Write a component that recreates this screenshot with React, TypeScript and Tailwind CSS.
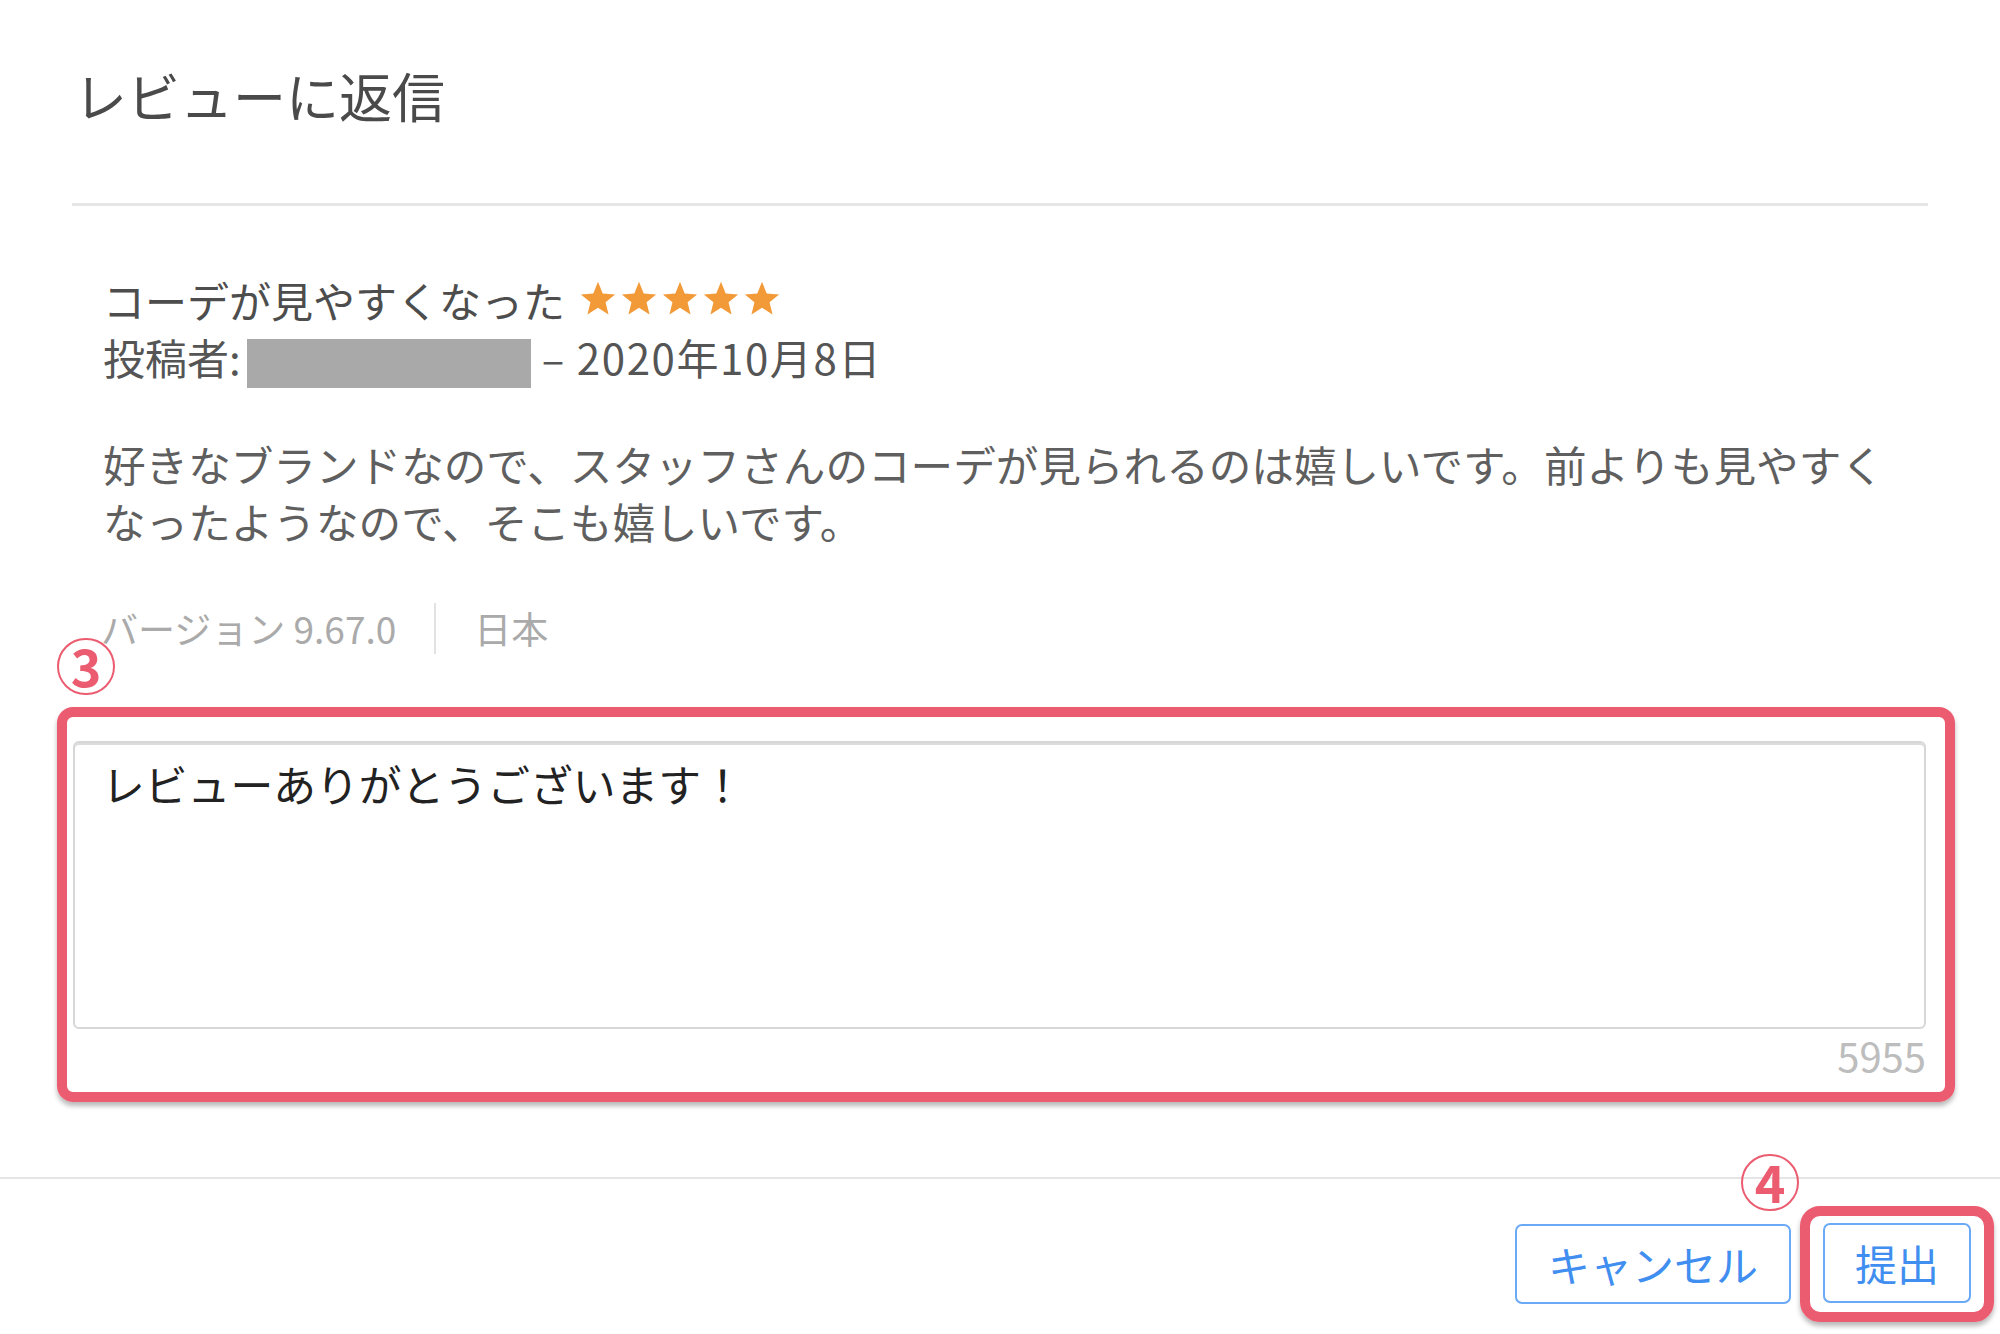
import React from 'react';

const FONT = {
  fontFamily: '"Noto Sans CJK JP", "Noto Sans", "Liberation Sans", sans-serif',
};

function Star() {
  return (
    <svg viewBox="0 0 24 24" className="h-[37px] w-[38px]" aria-hidden>
      <path
        d="M12 1.2l3.05 7.6 8.05.55-6.2 5.15 1.95 7.9L12 18.05 5.15 22.4l1.95-7.9L.9 9.35l8.05-.55z"
        fill="#f29a38"
      />
    </svg>
  );
}

// Pink circled step number drawn over the screenshot.
function Step({ n, className }: { n: number; className: string }) {
  return (
    <div
      className={`absolute flex h-[57px] w-[58px] items-center justify-center rounded-full border-[2px] border-[#ec5c70] text-[52px] font-bold leading-none text-[#ec5c70] ${className}`}
    >
      <span className="-mt-[3px]">{n}</span>
    </div>
  );
}

export default function App() {
  return (
    <div className="relative min-h-[1334px] w-full overflow-hidden bg-white text-[#4a4a4a]" style={FONT}>
      <header className="px-[72px]">
        <h1 className="pl-[2px] pt-[69px] text-[53px] font-normal leading-none text-[#4a4a4a]">
          レビューに返信
        </h1>
        <div className="mt-[81px] h-[3px] bg-[#e6e6e6]" />
      </header>

      <section className="px-[103px] pt-[65px]">
        <div className="flex h-[57px] items-start text-[42px] leading-[57px] text-[#4d4d4d]">
          <span>コーデが見やすくなった</span>
          <span className="ml-[14px] mt-[9px] flex gap-[3px]">
            <Star />
            <Star />
            <Star />
            <Star />
            <Star />
          </span>
        </div>
        <div className="flex h-[57px] items-start text-[42px] leading-[57px] text-[#555]">
          <span>投稿者:</span>
          <span className="ml-[6px] mt-[11px] h-[49px] w-[284px] bg-[#a9a9a9]" />
          <span className="ml-[11px] tracking-[1.6px]">– 2020年10月8日</span>
        </div>

        <p className="mt-[50px] text-[42.6px] leading-[57px] text-[#5f5f5f]">
          好きなブランドなので、スタッフさんのコーデが見られるのは嬉しいです。前よりも見やすくなったようなので、そこも嬉しいです。
        </p>

        <div className="mt-[55px] flex h-[48px] items-center text-[37px] leading-[48px] text-[#aaaaaa]">
          <span className="-ml-[2px]">バージョン 9.67.0</span>
          <span className="mx-[38px] h-[51px] w-[2px] bg-[#e2e2e2]" />
          <span>日本</span>
        </div>
      </section>

      <div className="relative ml-[57px] mr-[45px] mt-[55px]">
        <Step n={3} className="left-0 top-[-69px]" />
        <div className="rounded-[16px] border-[10px] border-[#ec5c70] pb-[17px] pl-[6px] pr-[19px] pt-[24px] shadow-[0_4px_5px_rgba(0,0,0,0.28)]">
          <div className="h-[288px] rounded-[6px] border-2 border-[#d7d7d7] px-[27px] pt-[12px] text-[42.8px] leading-[57px] text-[#222] shadow-[inset_0_2px_0_#dcdcdc]">
            レビューありがとうございます！
          </div>
          <div className="mt-[6px] text-right text-[40px] leading-[40px] text-[#bdbdbd]">5955</div>
        </div>
      </div>

      <div className="mt-[75px] h-[2px] bg-[#e5e5e5]" />

      <footer className="flex items-center justify-end pr-[6px] pt-[27px]">
        <button className="h-[80px] w-[276px] rounded-[7px] border-2 border-[#6aa9f5] text-[42px] leading-none text-[#3f8ef0]">
          キャンセル
        </button>
        <div className="relative ml-[9px]">
          <Step n={4} className="left-[-59px] top-[-52px]" />
          <div className="rounded-[20px] border-[10px] border-[#ec5c70] pb-[9px] pl-[13px] pr-[13px] pt-[7px] shadow-[0_4px_5px_rgba(0,0,0,0.28)]">
            <button className="h-[80px] w-[148px] rounded-[7px] border-2 border-[#6aa9f5] text-[42px] leading-none text-[#3f8ef0]">
              提出
            </button>
          </div>
        </div>
      </footer>
    </div>
  );
}
